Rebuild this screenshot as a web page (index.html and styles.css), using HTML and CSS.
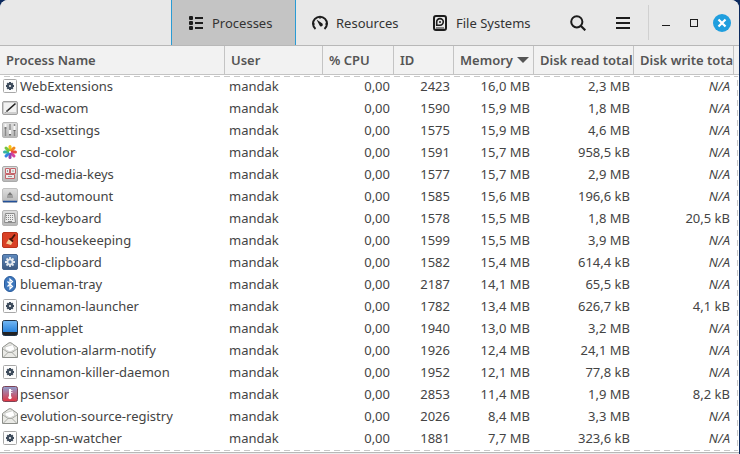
FILE: index.html
```html
<!DOCTYPE html>
<html lang="en">
<head>
  <meta charset="UTF-8">
  <title>System Monitor</title>
  <link rel="stylesheet" href="styles.css">
</head>
<body>
  <!-- process icons -->
  <svg class="sprite" aria-hidden="true">
    <linearGradient id="grey" x1="0" y1="0" x2="0" y2="1"><stop offset="0" stop-color="#dedede"/><stop offset="1" stop-color="#b8b8b8"/></linearGradient>
    <linearGradient id="blue" x1="0" y1="0" x2="0" y2="1"><stop offset="0" stop-color="#71b6f3"/><stop offset="1" stop-color="#2a83dc"/></linearGradient>
    <linearGradient id="steel" x1="0" y1="0" x2="0" y2="1"><stop offset="0" stop-color="#5f8bc0"/><stop offset="1" stop-color="#3c587f"/></linearGradient>
    <linearGradient id="hot" x1="0" y1="0" x2="0" y2="1"><stop offset="0" stop-color="#8c9fd0"/><stop offset="1" stop-color="#e2333f"/></linearGradient>
    <symbol id="gear" viewBox="0 0 16 16">
      <rect x="1.5" y="1.5" width="13" height="13" rx="1" fill="#fdfdfd" stroke="#a8a8a8"/>
      <path d="M8 4v8M4 8h8M5.2 5.2l5.6 5.6M10.8 5.2l-5.6 5.6" stroke="#3d4b5c" stroke-width="2"/>
      <circle cx="8" cy="8" r="2" fill="#fdfdfd" stroke="#3d4b5c" stroke-width="2"/>
    </symbol>
    <symbol id="wacom" viewBox="0 0 16 16">
      <rect x=".5" y="1.5" width="15" height="13" rx="1.5" fill="#cfcfcf" stroke="#a0a0a0"/>
      <rect x="2" y="3" width="12" height="9" fill="#f2f2f2"/>
      <path d="M4.5 11.5l9-8" stroke="#222" stroke-width="1.6"/>
      <path d="M3.5 12.5l2-2" stroke="#777"/>
    </symbol>
    <symbol id="sliders" viewBox="0 0 16 16">
      <rect x=".5" y=".5" width="15" height="15" rx="1.5" fill="url(#grey)" stroke="#b5b5b5"/>
      <path d="M3.5 2v12M8 2v12M12.5 2v12" stroke="#8a8a8a" stroke-width="1.4"/>
      <path d="M3.5 2v3M8 8v4M12.5 4v4" stroke="#f7f7f7" stroke-width="2.2"/>
      <path d="M2.5 6h2M7 12.5h2M11.5 8.5h2" stroke="#666"/>
    </symbol>
    <symbol id="color" viewBox="0 0 16 16">
      <g stroke-width="3" stroke-linecap="round">
        <path d="M8 6V2.5" stroke="#f5c211"/><path d="M9.5 6.5l2.5-2.5" stroke="#f28a1c"/>
        <path d="M10 8h3.5" stroke="#e84a3c"/><path d="M9.5 9.5l2.500 2.500" stroke="#d6409f"/>
        <path d="M8 10v3.500" stroke="#9141ac"/><path d="M6.500 9.500L4 12" stroke="#3584e4"/>
        <path d="M6 8H2.500" stroke="#34b3a0"/><path d="M6.500 6.500L4 4" stroke="#76c442"/>
      </g>
      <circle cx="8" cy="8" r="1.1" fill="#fff"/>
    </symbol>
    <symbol id="media" viewBox="0 0 16 16">
      <rect x=".5" y=".5" width="15" height="15" rx="1.5" fill="url(#grey)" stroke="#aaa"/>
      <path d="M3.5 2.5h4v5h-4zM8.5 2.5h5v5h-5zM3.500 8.500h9v4h-9z" fill="#ececec" stroke="#c4646a"/>
      <path d="M5.500 4v2M11 4v2M6 10.500h4" stroke="#999"/>
    </symbol>
    <symbol id="eject" viewBox="0 0 16 16">
      <rect x=".5" y=".5" width="15" height="14" rx="1.5" fill="url(#grey)" stroke="#c0c0c0"/>
      <path d="M8 4l3 3.500H5zM5 8.500h6v1H5z" fill="#777"/>
      <path d="M1 13.500h14" stroke="#21509a" stroke-width="1.5"/>
    </symbol>
    <symbol id="keyboard" viewBox="0 0 16 16">
      <rect x=".5" y=".5" width="15" height="15" rx="1.5" fill="url(#grey)" stroke="#b5b5b5"/>
      <path d="M3.500 3.500h9l1 9h-11z" fill="#ececec" stroke="#8c8c8c"/>
      <path d="M4 5.500h8M4 7.500h8M4 9.500h8" stroke="#888" stroke-dasharray="1 1"/>
      <path d="M6 11.500h4" stroke="#888"/>
    </symbol>
    <symbol id="broom" viewBox="0 0 16 16">
      <rect x=".5" y=".5" width="15" height="15" rx="1.5" fill="#d94126" stroke="#b9331c"/>
      <path d="M13 2.500L9.500 7" stroke="#421409" stroke-width="1.8"/>
      <path d="M7 7l4 2.500-2 3.500-5-1.500z" fill="#f6cf9a"/>
      <path d="M7.500 6.500l3.500 3" stroke="#421409" stroke-width="1.8"/>
    </symbol>
    <symbol id="clip" viewBox="0 0 16 16">
      <rect x=".5" y=".5" width="15" height="15" rx="1.5" fill="url(#steel)" stroke="#46658e"/>
      <path d="M8 3v10M3 8h10M4.500 4.500l7 7M11.500 4.500l-7 7" stroke="#e4e9ef" stroke-width="1.8"/>
      <circle cx="8" cy="8" r="2.6" fill="#5d81ae" stroke="#e4e9ef" stroke-width="1.8"/>
    </symbol>
    <symbol id="bluetooth" viewBox="0 0 16 16">
      <rect x="2.500" y=".5" width="11" height="15" rx="5.5" fill="#3d77bd" stroke="#285a9b"/>
      <path d="M5.500 5.500l5 5L8 12.800V3.200l2.500 2.300-5 5" fill="none" stroke="#fff" stroke-width="1.2"/>
    </symbol>
    <symbol id="screen" viewBox="0 0 16 16">
      <rect x=".5" y=".5" width="15" height="15" rx="2" fill="#222" stroke="#20344a"/>
      <path d="M1 2q0-1 1-1h12q1 0 1 1v10H1z" fill="url(#blue)"/>
    </symbol>
    <symbol id="mail" viewBox="0 0 16 16">
      <path d="M.5 5.500L7 .8h2l6.500 4.700v10H.5z" fill="#eaeae6" stroke="#8d8f8a"/>
      <path d="M3 7.500V5l8-2.500 2 5L8 10z" fill="#fff" stroke="#c3c4c0" stroke-width=".8"/>
      <path d="M1 7l5 3.500h4L15 7M1.500 15L6 10.500M14.500 15L10 10.500" fill="none" stroke="#a9aba6"/>
    </symbol>
    <symbol id="sensor" viewBox="0 0 16 16">
      <rect x=".5" y=".5" width="15" height="15" rx="2" fill="url(#hot)" stroke="#7d4356"/>
      <path d="M8 3v8" stroke="#fff" stroke-width="2"/>
      <circle cx="8" cy="11.500" r="1.7" fill="#fff"/>
      <path d="M9 4.500h1.500M9 6.500h1.500" stroke="#fff" stroke-width=".8"/>
    </symbol>
  </svg>

  <div class="window">
    <header class="headerbar">
      <nav class="tabs">
        <button class="tab active">
          <svg width="16" height="16" viewBox="0 0 16 16"><path d="M7 3h8M7 8h8M7 13h8" stroke="currentColor" stroke-width="2"/><rect x="1" y="1" width="4" height="4" rx="1"/><rect x="1" y="6" width="4" height="4" rx="1"/><rect x="1" y="11" width="4" height="4" rx="1"/></svg>
          Processes
        </button>
        <button class="tab">
          <svg width="16" height="16" viewBox="0 0 16 16"><path d="M3.500 14A7 7 0 1 1 12.500 14" fill="none" stroke="currentColor" stroke-width="2"/><path d="M4.500 4.500L10 8.300A1.700 1.700 0 1 1 7.500 10.300z"/><path d="M1 9h2M13 9h2M8 1v3" stroke="currentColor"/></svg>
          Resources
        </button>
        <button class="tab">
          <svg width="16" height="16" viewBox="0 0 16 16"><rect x="2" y="1" width="12" height="14" rx="2" fill="none" stroke="currentColor" stroke-width="2"/><path d="M4.700 10.200V7a3.300 3.300 0 1 1 3.300 3.200z" fill="none" stroke="currentColor" stroke-width="1.6"/><circle cx="8" cy="7" r="1"/><path d="M4 13h8" stroke="currentColor"/></svg>
          File Systems
        </button>
      </nav>
      <div class="actions">
        <button class="action" aria-label="Search">
          <svg width="16" height="16" viewBox="0 0 16 16"><circle cx="6.800" cy="6.800" r="5.600" fill="none" stroke="currentColor" stroke-width="2"/><path d="M11 11l4.300 4.300" stroke="currentColor" stroke-width="2.200"/></svg>
        </button>
        <button class="action" aria-label="Menu">
          <svg width="16" height="16" viewBox="0 0 16 16"><path d="M1 3h14M1 8h14M1 13h14" stroke="currentColor" stroke-width="2"/></svg>
        </button>
      </div>
      <div class="controls">
        <button class="control" aria-label="Minimize"><svg width="18" height="18" viewBox="0 0 18 18"><path d="M5 11.500h8" stroke="currentColor"/></svg></button>
        <button class="control" aria-label="Maximize"><svg width="18" height="18" viewBox="0 0 18 18"><rect x="5.500" y="5.500" width="7" height="7" fill="none" stroke="currentColor"/></svg></button>
        <button class="control" aria-label="Close"><svg width="18" height="18" viewBox="0 0 18 18"><circle cx="9" cy="9" r="9" fill="#1f9ede"/><path d="M5.500 5.500l7 7M12.500 5.500l-7 7" stroke="#fff" stroke-width="2.200"/></svg></button>
      </div>
    </header>

    <main class="list">
      <table class="processes">
        <colgroup>
          <col><col class="col-user"><col class="col-cpu"><col class="col-id"><col class="col-memory"><col class="col-disk"><col class="col-disk"><col class="col-rest">
        </colgroup>
        <thead>
          <tr>
            <th><button>Process Name</button></th>
            <th><button>User</button></th>
            <th><button>% CPU</button></th>
            <th><button>ID</button></th>
            <th aria-sort="descending"><button>Memory<svg class="arrow" width="12" height="6" viewBox="0 0 12 6"><path d="M0 0h12L6 6z"/></svg></button></th>
            <th><button>Disk read total</button></th>
            <th><button>Disk write total</button></th>
            <th></th>
          </tr>
        </thead>
        <tbody>
          <tr><td><svg class="icon"><use href="#gear"/></svg>WebExtensions</td><td>mandak</td><td>0,00</td><td>2423</td><td>16,0 MB</td><td>2,3 MB</td><td><i>N/A</i></td><td></td></tr>
          <tr><td><svg class="icon"><use href="#wacom"/></svg>csd-wacom</td><td>mandak</td><td>0,00</td><td>1590</td><td>15,9 MB</td><td>1,8 MB</td><td><i>N/A</i></td><td></td></tr>
          <tr><td><svg class="icon"><use href="#sliders"/></svg>csd-xsettings</td><td>mandak</td><td>0,00</td><td>1575</td><td>15,9 MB</td><td>4,6 MB</td><td><i>N/A</i></td><td></td></tr>
          <tr><td><svg class="icon"><use href="#color"/></svg>csd-color</td><td>mandak</td><td>0,00</td><td>1591</td><td>15,7 MB</td><td>958,5 kB</td><td><i>N/A</i></td><td></td></tr>
          <tr><td><svg class="icon"><use href="#media"/></svg>csd-media-keys</td><td>mandak</td><td>0,00</td><td>1577</td><td>15,7 MB</td><td>2,9 MB</td><td><i>N/A</i></td><td></td></tr>
          <tr><td><svg class="icon"><use href="#eject"/></svg>csd-automount</td><td>mandak</td><td>0,00</td><td>1585</td><td>15,6 MB</td><td>196,6 kB</td><td><i>N/A</i></td><td></td></tr>
          <tr><td><svg class="icon"><use href="#keyboard"/></svg>csd-keyboard</td><td>mandak</td><td>0,00</td><td>1578</td><td>15,5 MB</td><td>1,8 MB</td><td>20,5 kB</td><td></td></tr>
          <tr><td><svg class="icon"><use href="#broom"/></svg>csd-housekeeping</td><td>mandak</td><td>0,00</td><td>1599</td><td>15,5 MB</td><td>3,9 MB</td><td><i>N/A</i></td><td></td></tr>
          <tr><td><svg class="icon"><use href="#clip"/></svg>csd-clipboard</td><td>mandak</td><td>0,00</td><td>1582</td><td>15,4 MB</td><td>614,4 kB</td><td><i>N/A</i></td><td></td></tr>
          <tr><td><svg class="icon"><use href="#bluetooth"/></svg>blueman-tray</td><td>mandak</td><td>0,00</td><td>2187</td><td>14,1 MB</td><td>65,5 kB</td><td><i>N/A</i></td><td></td></tr>
          <tr><td><svg class="icon"><use href="#gear"/></svg>cinnamon-launcher</td><td>mandak</td><td>0,00</td><td>1782</td><td>13,4 MB</td><td>626,7 kB</td><td>4,1 kB</td><td></td></tr>
          <tr><td><svg class="icon"><use href="#screen"/></svg>nm-applet</td><td>mandak</td><td>0,00</td><td>1940</td><td>13,0 MB</td><td>3,2 MB</td><td><i>N/A</i></td><td></td></tr>
          <tr><td><svg class="icon"><use href="#mail"/></svg>evolution-alarm-notify</td><td>mandak</td><td>0,00</td><td>1926</td><td>12,4 MB</td><td>24,1 MB</td><td><i>N/A</i></td><td></td></tr>
          <tr><td><svg class="icon"><use href="#gear"/></svg>cinnamon-killer-daemon</td><td>mandak</td><td>0,00</td><td>1952</td><td>12,1 MB</td><td>77,8 kB</td><td><i>N/A</i></td><td></td></tr>
          <tr><td><svg class="icon"><use href="#sensor"/></svg>psensor</td><td>mandak</td><td>0,00</td><td>2853</td><td>11,4 MB</td><td>1,9 MB</td><td>8,2 kB</td><td></td></tr>
          <tr><td><svg class="icon"><use href="#mail"/></svg>evolution-source-registry</td><td>mandak</td><td>0,00</td><td>2026</td><td>8,4 MB</td><td>3,3 MB</td><td><i>N/A</i></td><td></td></tr>
          <tr><td><svg class="icon"><use href="#gear"/></svg>xapp-sn-watcher</td><td>mandak</td><td>0,00</td><td>1881</td><td>7,7 MB</td><td>323,6 kB</td><td><i>N/A</i></td><td></td></tr>
        </tbody>
      </table>
    </main>
  </div>
</body>
</html>
```
FILE: styles.css
```css
body {
  margin: 0;
  background: #0b2a5e;
  font-family: "Noto Sans", "Open Sans", sans-serif;
  font-size: 13px;
  color: #444;
}
button {
  font: inherit;
  color: inherit;
  background: none;
  border: 0;
  padding: 0;
}
.sprite {
  position: absolute;
  width: 0;
  height: 0;
}
.window {
  margin-right: 1px;
  background: #ebebeb;
  border-radius: 8px 8px 0 0;
  overflow: hidden;
}

/* header bar */
.headerbar {
  display: flex;
  justify-content: flex-end;
  height: 45px;
  background: #e8e8e8;
  border-bottom: 1px solid #b8b8b8;
  color: #333;
}
.headerbar svg {
  display: block;
  flex-shrink: 0;
  color: #1c1c1c;
  fill: #1c1c1c;
}
.tabs {
  display: flex;
}
.tab {
  display: flex;
  align-items: center;
  gap: 8px;
  padding: 0 16px;
  width: 120px;
  white-space: nowrap;
  box-sizing: border-box;
}
.tab.active {
  width: 125px;
  background: #c4c4c4;
  border: solid #2a9bd4;
  border-width: 0 1px;
}
.actions {
  display: flex;
  align-items: center;
  gap: 29px;
  padding: 0 17px 0 34px;
}
.controls {
  display: flex;
  align-items: center;
  gap: 10px;
  margin: 5px 0;
  padding: 0 8px;
  border-left: 1px solid #d0d0d0;
}

/* process table */
.list {
  position: relative;
  background: #fff;
  border-bottom: 1px solid #b8b8b8;
  padding-bottom: 3px;
  margin-bottom: 1px;
}
.list::after {
  content: "";
  position: absolute;
  inset: 30px 1px 1px 0;
  pointer-events: none;
  background:
    repeating-linear-gradient(to right, transparent 0 4px, #c8c8c8 4px 10px) 0 0 / 100% 1px no-repeat,
    repeating-linear-gradient(to right, transparent 0 4px, #c8c8c8 4px 10px) 0 100% / 100% 1px no-repeat,
    repeating-linear-gradient(to bottom, transparent 0 4px, #c8c8c8 4px 10px) 100% 0 / 1px 100% no-repeat;
}
.processes {
  width: 100%;
  table-layout: fixed;
  border-collapse: separate;
  border-spacing: 0;
}
.col-user { width: 98px; }
.col-cpu { width: 71px; }
.col-id { width: 60px; }
.col-memory { width: 80px; }
.col-disk { width: 100px; }
.col-rest { width: 5px; }

.processes th {
  height: 28px;
  padding: 0 0 0 6px;
  background: #f2f2f2;
  border-right: 1px solid #c4c4c4;
  border-bottom: 1px solid #c4c4c4;
  color: #555;
  font-weight: 600;
  text-align: left;
  white-space: nowrap;
  overflow: hidden;
}
.processes th:last-child {
  border-right: 0;
  padding: 0;
}
.arrow {
  margin-left: 4px;
  vertical-align: 2px;
  fill: #555;
}
.processes td {
  height: 22px;
  line-height: 20px;
  padding: 0 4px;
  text-align: right;
  white-space: nowrap;
}
.processes td:first-child {
  padding: 0 0 0 2px;
  text-align: left;
}
.processes td:nth-child(2) {
  text-align: left;
}
.processes td:last-child {
  padding: 0;
}
.icon {
  width: 16px;
  height: 16px;
  margin-right: 2px;
  vertical-align: -3px;
}
```
